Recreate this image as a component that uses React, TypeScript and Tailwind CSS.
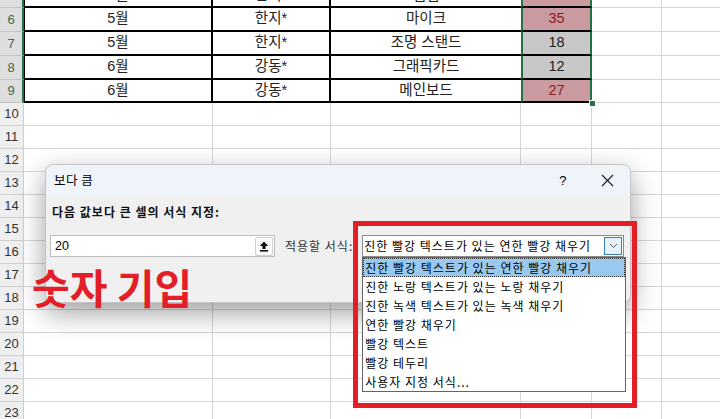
import React from "react";

type Row = { n: number; h: "a" | "b"; cells?: [string, string, string, string]; fill?: "pink" | "gray" };

const rows: Row[] = [
  { n: 5, h: "a", cells: ["5월", "한지*", "웹캠", "22"], fill: "pink" },
  { n: 6, h: "b", cells: ["5월", "한지*", "마이크", "35"], fill: "pink" },
  { n: 7, h: "b", cells: ["5월", "한지*", "조명 스탠드", "18"], fill: "gray" },
  { n: 8, h: "b", cells: ["6월", "강동*", "그래픽카드", "12"], fill: "gray" },
  { n: 9, h: "a", cells: ["6월", "강동*", "메인보드", "27"], fill: "pink" },
  ...Array.from({ length: 14 }, (_, i) => ({ n: 10 + i, h: "a" as const })),
];

const items = [
  "진한 빨강 텍스트가 있는 연한 빨강 채우기",
  "진한 노랑 텍스트가 있는 노랑 채우기",
  "진한 녹색 텍스트가 있는 녹색 채우기",
  "연한 빨강 채우기",
  "빨강 텍스트",
  "빨강 테두리",
  "사용자 지정 서식...",
];

function GridRow({ r }: { r: Row }) {
  const sel = !!r.cells;
  const h = r.h === "a" ? "h-[23px]" : "h-[24px]";
  if (!sel) {
    return (
      <div className={`flex ${h}`}>
        <div className="w-[24px] shrink-0 bg-[#efefef] border-r border-b border-[#cfcfcf] text-[13px] text-[#333] flex items-center justify-center">
          {r.n}
        </div>
        <div className="w-[189px] shrink-0 border-r border-b border-[#d6d6d6]" />
        <div className="w-[118px] shrink-0 border-r border-b border-[#d6d6d6]" />
        <div className="w-[190px] shrink-0 border-r border-b border-[#d6d6d6]" />
        <div className="w-[71px] shrink-0 border-r border-b border-[#d6d6d6]" />
        <div className="w-[70px] shrink-0 border-r border-b border-[#d6d6d6]" />
        <div className="w-[70px] shrink-0 border-r border-b border-[#d6d6d6]" />
      </div>
    );
  }
  const c = r.cells!;
  const fill =
    r.fill === "pink" ? "bg-[#c99aa0] text-[#8e1a20]" : "bg-[#c8c8c8] text-[#222]";
  return (
    <div className={`flex ${h}`}>
      <div className="w-[24px] shrink-0 bg-[#dedede] border-r-2 border-r-[#217346] border-b border-b-[#c4c4c4] text-[13px] text-[#3b6b4e] flex items-center justify-center">
        {r.n}
      </div>
      <div className="w-[189px] shrink-0 border-l border-r-2 border-b-2 border-black flex items-center justify-center text-[14.5px] text-[#222]">
        {c[0]}
      </div>
      <div className="w-[118px] shrink-0 border-r-2 border-b-2 border-black flex items-center justify-center text-[14.5px] text-[#222]">
        {c[1]}
      </div>
      <div className="w-[190px] shrink-0 border-b-2 border-black flex items-center justify-center text-[14.5px] text-[#222]">
        {c[2]}
      </div>
      <div className={`w-[71px] shrink-0 border-x-2 border-x-[#217346] border-b-2 border-b-black flex items-center justify-center text-[14.5px] ${fill}`}>
        {c[3]}
      </div>
      <div className="w-[70px] shrink-0 border-r border-b border-[#d6d6d6]" />
      <div className="w-[70px] shrink-0 border-r border-b border-[#d6d6d6]" />
    </div>
  );
}

export default function App() {
  return (
    <div className="relative w-[720px] h-[419px] overflow-hidden bg-white font-['Liberation_Sans','Noto_Sans_CJK_KR',sans-serif]">
      <div className="-mt-[15px] flex flex-col">
        {rows.map((r) => (
          <GridRow key={r.n} r={r} />
        ))}
      </div>

      {/* fill handle */}
      <div className="absolute left-[589px] top-[100px] w-[7px] h-[7px] bg-[#217346] border border-white" />

      {/* dialog */}
      <div className="absolute left-[45px] top-[164px] w-[586px] h-[139px] rounded-[8px] border border-[#c4c4c4] bg-[#f0f0f0] shadow-[0_10px_28px_rgba(0,0,0,0.38)] font-['Noto_Sans_CJK_KR',sans-serif]">
        <div className="h-[31px] rounded-t-[8px] bg-[#eef4f9] flex items-center pl-[8px] text-[12.5px] tracking-[0.5px] text-black">
          <span>보다 큼</span>
          <span className="ml-auto mr-[34px] text-[13px] font-['Liberation_Sans',sans-serif]">?</span>
          <svg width="13" height="13" viewBox="0 0 13 13" className="mr-[16px]">
            <path d="M1 1 L12 12 M12 1 L1 12" stroke="#222" strokeWidth="1.2" fill="none" />
          </svg>
        </div>
        <div className="pt-[7px] pl-[6px] text-[12px] tracking-[1px] font-bold text-[#111]">다음 값보다 큰 셀의 서식 지정:</div>
        <div className="mt-[14px] ml-[4px] flex items-center">
          <div className="w-[225px] h-[22px] bg-white border border-[#bdbdbd] flex items-center pl-[4px] pr-[1px] text-[12.5px] text-black">
            <span className="font-['Liberation_Sans',sans-serif]">20</span>
            <div className="ml-auto w-[18px] h-[19px] border border-[#d0d0d0] rounded-[2px] bg-[#fbfbfb] flex items-center justify-center">
              <svg width="10" height="11" viewBox="0 0 10 11">
                <path d="M5 0.5 L9.2 5 L6.6 5 L6.6 8 L3.4 8 L3.4 5 L0.8 5 Z" fill="#111" />
                <rect x="1" y="9" width="8" height="1.6" fill="#111" />
              </svg>
            </div>
          </div>
          <span className="ml-[10px] text-[12px] tracking-[1px] text-[#333]">적용할 서식:</span>
          <div className="relative ml-[9px] w-[262px] h-[22px] bg-white border border-[#8a8a8a] flex items-center pl-[1px] pr-[1px] text-[12px] tracking-[1px] text-black">
            <span>진한 빨강 텍스트가 있는 연한 빨강 채우기</span>
            <div className="ml-auto w-[18px] h-[18px] bg-[#e5f1fb] border border-[#3c7fb1] flex items-center justify-center">
              <svg width="9" height="6" viewBox="0 0 9 6">
                <path d="M1 1 L4.5 4.5 L8 1" stroke="#555" strokeWidth="1" fill="none" />
              </svg>
            </div>
            <div className="absolute left-[-1px] top-[21px] w-[264px] bg-white border border-[#646464] flex flex-col z-10">
              {items.map((t, i) => (
                <div
                  key={t}
                  className={
                    i === 0
                      ? "h-[19px] flex items-center pl-[1px] bg-[#99c9ef] border border-dotted border-[#333] text-black"
                      : "h-[19px] flex items-center pl-[2px] text-black"
                  }
                >
                  {t}
                </div>
              ))}
            </div>
          </div>
        </div>
      </div>

      {/* annotations */}
      <div className="absolute left-[353px] top-[221px] w-[284px] h-[187px] border-[5px] border-[#e31e26] z-20" />
      <div className="absolute left-[32px] top-[266px] text-[41px] leading-none font-bold text-[#e31e26] font-['Noto_Sans_CJK_KR',sans-serif] z-20">
        숫자 기입
      </div>
    </div>
  );
}
